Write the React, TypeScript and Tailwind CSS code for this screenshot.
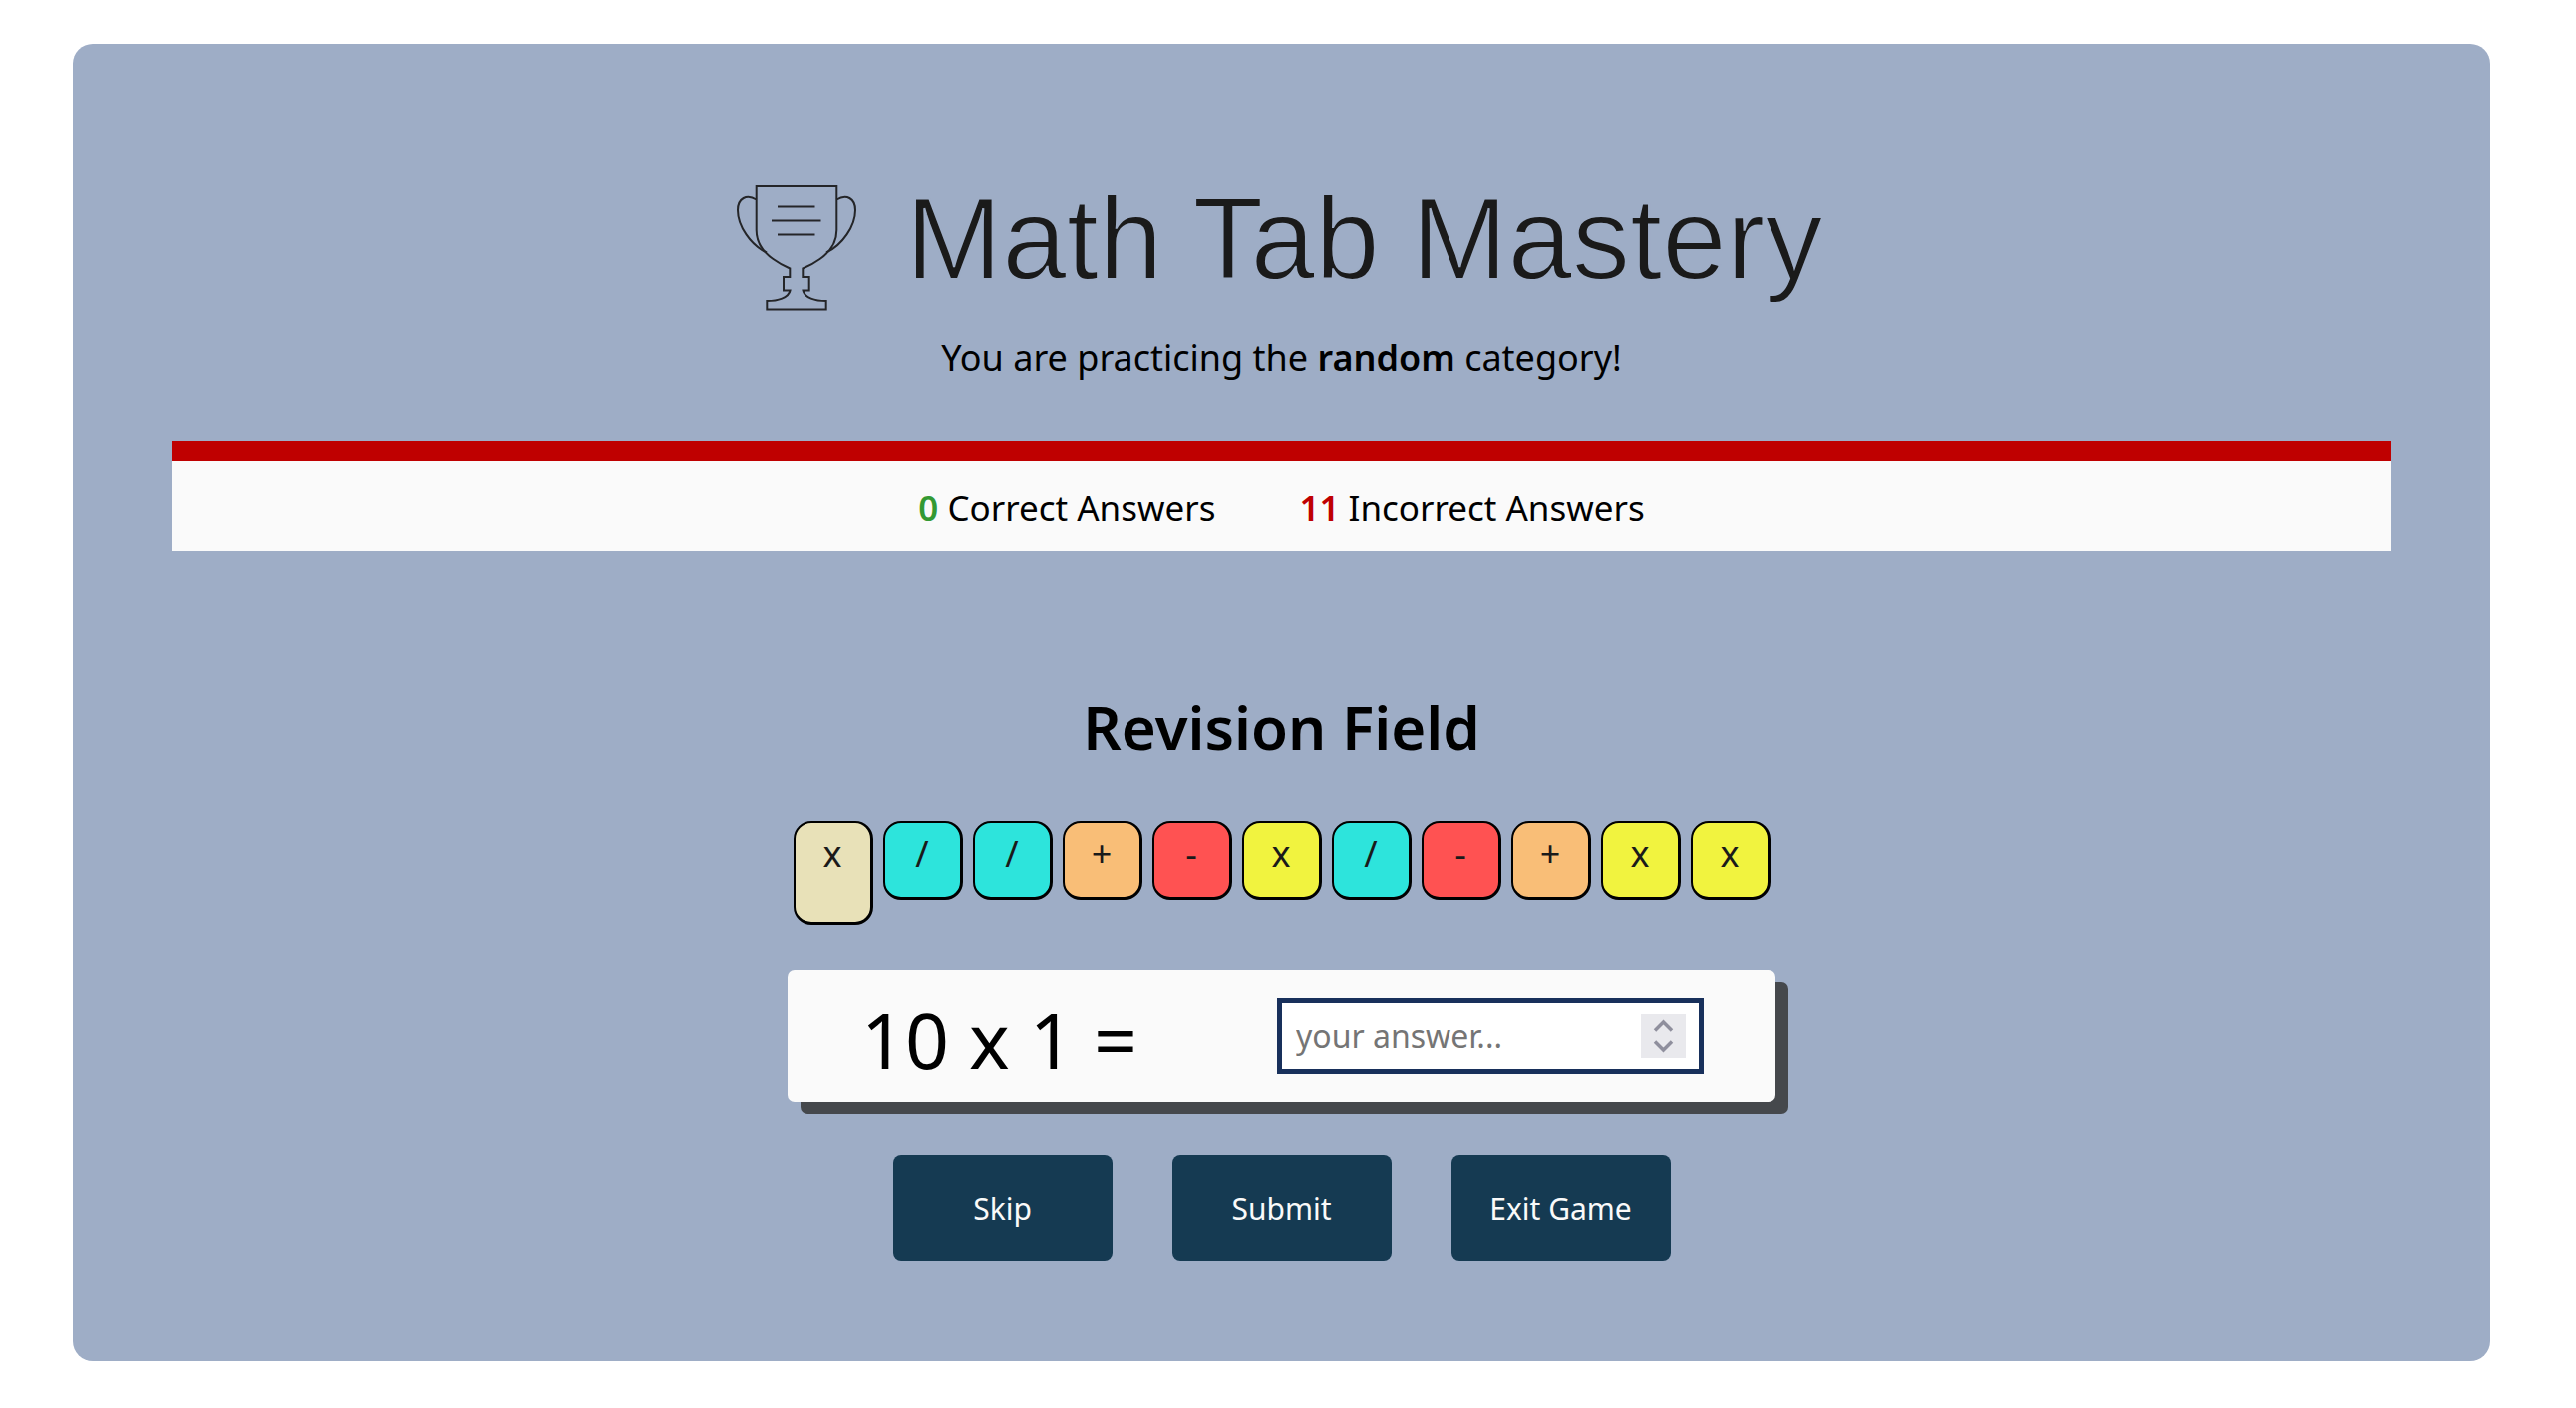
import React from "react";

type Operation = "x" | "/" | "+" | "-";

const operations: Operation[] = ["x", "/", "/", "+", "-", "x", "/", "-", "+", "x", "x"];

const tileColors: Record<Operation, string> = {
  x: "bg-[#f1f33f]",
  "/": "bg-[#2de4dc]",
  "+": "bg-[#f9be77]",
  "-": "bg-[#ff5252]",
};

function Trophy() {
  return (
    <svg viewBox="0 0 120 126" className="h-[126px] w-[120px] shrink-0" fill="none" stroke="#242528" strokeWidth="2" aria-hidden="true">
      <path d="M19.700 1H100.300V45C100.300 57 95 66 83.500 74Q76 79.500 66.300 83.500V92H72.700V105.500H66.500C68 113 79 116 89.700 116V124.500H30.300V116C41 116 52 113 53.500 105.500H47V92H53.300V83.500Q44 79.500 36.500 74C25 66 19.700 57 19.700 45Z" />
      <path d="M19.700 14.500C10 8.500 1 13 1 25C1 41 14 60 30 67.500" />
      <path d="M100.300 14.500C110 8.500 119 13 119 25C119 41 106 60 90 67.500" />
      <path d="M41 21.500H78.500M35 35.500H84.500M41 49.500H78.500" />
    </svg>
  );
}

function Tile({ operation, current }: { operation: Operation; current: boolean }) {
  return (
    <li
      className={
        "w-20 rounded-[18px] border-2 border-r-[3px] border-b-[3px] border-black pt-1 text-center text-[36px] leading-[54px] text-[#1a1a1a] " +
        (current ? "h-[105px] bg-[#e8e1b8]" : "h-20 " + tileColors[operation])
      }
    >
      {operation}
    </li>
  );
}

function ActionButton({ children, type = "button" }: { children: React.ReactNode; type?: "button" | "submit" }) {
  return (
    <button type={type} form={type === "submit" ? "answer-form" : undefined} className="h-[107px] w-[220px] rounded-lg bg-[#153a52] text-[30px] text-[#fafafa]">
      {children}
    </button>
  );
}

export default function App() {
  return (
    <main className="mt-11 mr-[86px] mb-[47px] ml-[73px] flex flex-col items-center rounded-[20px] bg-[#9eadc6] px-[100px] pt-[142px] pb-[100px] font-['Noto_Sans',sans-serif] text-black">
      <h1 className="flex items-start gap-[50px] pr-1 font-['Liberation_Sans',sans-serif] text-[116px] leading-[108px] text-[#1a1a1a] [-webkit-text-stroke:2px_#9eadc6]">
        <Trophy />
        Math Tab Mastery
      </h1>
      <p className="mt-5 text-[36px] leading-[54px]">
        You are practicing the <b className="font-semibold">random</b> category!
      </p>
      <section className="mt-14 flex w-full justify-center gap-[84px] border-t-20 border-[#bf0000] bg-[#fafafa] pt-5 pb-[17px] text-[35px] leading-[54px]">
        <p><b className="font-semibold text-[#339933]">0</b> Correct Answers</p>
        <p><b className="font-semibold text-[#bf0000]">11</b> Incorrect Answers</p>
      </section>
      <h2 className="mt-[130px] text-[60px] leading-[92px] font-semibold">Revision Field</h2>
      <ul className="mt-12 flex gap-2.5">
        {operations.map((operation, i) => (
          <Tile key={i} operation={operation} current={i === 0} />
        ))}
      </ul>
      <form id="answer-form" onSubmit={(e) => e.preventDefault()} className="mt-[45px] flex h-[132px] w-[991px] items-center justify-between rounded-[7px] bg-[#fafafa] pr-[72px] pl-[74px] shadow-[13px_12px_0_#45484c]">
        <label htmlFor="answer" className="pt-2 text-[77px] leading-[100px]">10 x 1 =</label>
        <div className="flex h-[76px] w-[428px] items-center border-[5px] border-[#18305b] bg-white pr-[13px] pl-3.5">
          <input id="answer" inputMode="numeric" placeholder="your answer..." className="w-full min-w-0 bg-transparent text-[32px] outline-none placeholder:text-[#757575]" />
          <svg viewBox="0 0 45 44" className="h-11 w-[45px] shrink-0 bg-[#e9e9ed]" fill="none" stroke="#8f8f9d" strokeWidth="3.5" aria-hidden="true">
            <path d="M14 16.500L22.500 8L31 16.500M14 27.500L22.500 36L31 27.500" />
          </svg>
        </div>
      </form>
      <div className="mt-[53px] flex gap-[60px]">
        <ActionButton>Skip</ActionButton>
        <ActionButton type="submit">Submit</ActionButton>
        <ActionButton>Exit Game</ActionButton>
      </div>
    </main>
  );
}
